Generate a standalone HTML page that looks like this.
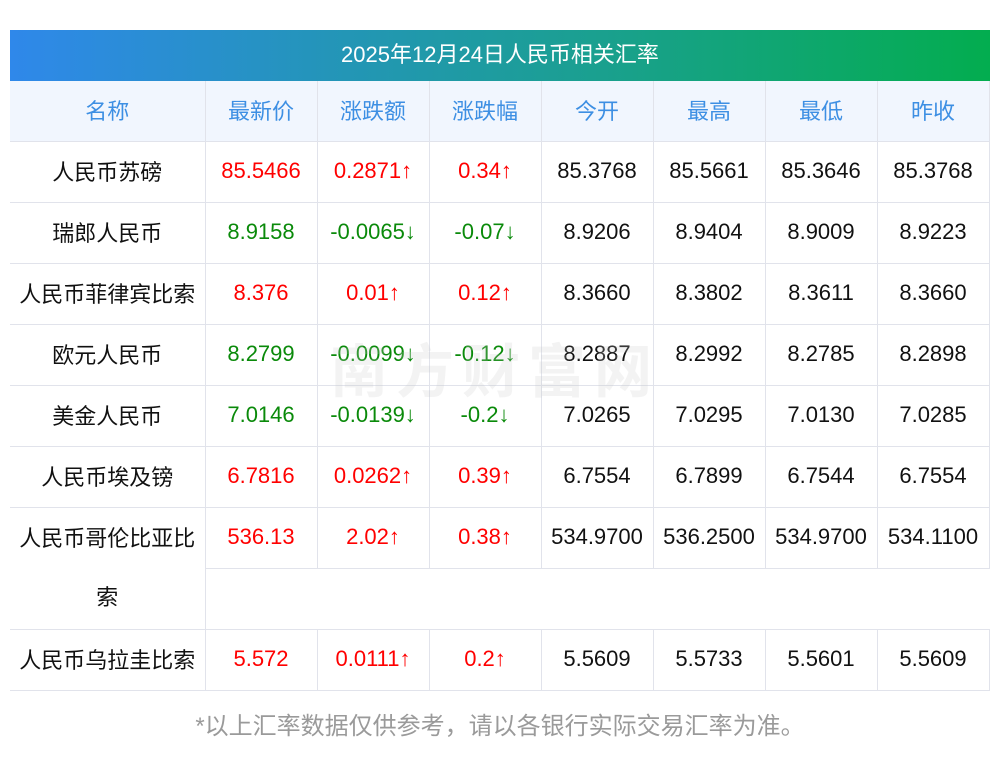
<!DOCTYPE html>
<html><head><meta charset="utf-8"><style>
body{margin:0;background:#fff;font-family:"Liberation Sans","Noto Sans CJK SC",sans-serif;}
.wrap{position:absolute;left:10px;top:30px;width:980px;}
.title{height:51px;line-height:49px;text-align:center;color:#fff;font-size:22px;background:linear-gradient(90deg,#2f88ea,#1aa08f 60%,#03ad4f);}
table{border-collapse:collapse;width:979px;table-layout:fixed;}
td{height:58px;padding:0 0 2px 0;border-bottom:1px solid #e1e3eb;border-right:1px solid #e1e3eb;text-align:center;font-size:22px;color:#111;white-space:nowrap;}
tr.h td{background:#f1f6fe;color:#3d8fe3;}
.r{color:#f00}.g{color:#0a8a0a}
.nb{border-right:none}
.foot{position:absolute;top:706px;left:0;width:1000px;text-align:center;color:#9a9a9a;font-size:24px;}
.wm{position:absolute;left:330px;top:325px;font-size:58px;color:rgba(200,200,200,.22);font-weight:bold;letter-spacing:8px}
</style></head><body>
<div class="wrap">
<div class="title">2025年12月24日人民币相关汇率</div>
<table>
<colgroup><col style="width:195px"><col style="width:112px"><col style="width:112px"><col style="width:112px"><col style="width:112px"><col style="width:112px"><col style="width:112px"><col style="width:112px"></colgroup>
<tr class="h"><td>名称</td><td>最新价</td><td>涨跌额</td><td>涨跌幅</td><td>今开</td><td>最高</td><td>最低</td><td>昨收</td></tr>
<tr><td>人民币苏磅</td><td class="r">85.5466</td><td class="r">0.2871↑</td><td class="r">0.34↑</td><td>85.3768</td><td>85.5661</td><td>85.3646</td><td>85.3768</td></tr>
<tr><td>瑞郎人民币</td><td class="g">8.9158</td><td class="g">-0.0065↓</td><td class="g">-0.07↓</td><td>8.9206</td><td>8.9404</td><td>8.9009</td><td>8.9223</td></tr>
<tr><td>人民币菲律宾比索</td><td class="r">8.376</td><td class="r">0.01↑</td><td class="r">0.12↑</td><td>8.3660</td><td>8.3802</td><td>8.3611</td><td>8.3660</td></tr>
<tr><td>欧元人民币</td><td class="g">8.2799</td><td class="g">-0.0099↓</td><td class="g">-0.12↓</td><td>8.2887</td><td>8.2992</td><td>8.2785</td><td>8.2898</td></tr>
<tr><td>美金人民币</td><td class="g">7.0146</td><td class="g">-0.0139↓</td><td class="g">-0.2↓</td><td>7.0265</td><td>7.0295</td><td>7.0130</td><td>7.0285</td></tr>
<tr><td>人民币埃及镑</td><td class="r">6.7816</td><td class="r">0.0262↑</td><td class="r">0.39↑</td><td>6.7554</td><td>6.7899</td><td>6.7544</td><td>6.7554</td></tr>
<tr><td rowspan="2" style="line-height:59px">人民币哥伦比亚比<br>索</td><td class="r">536.13</td><td class="r">2.02↑</td><td class="r">0.38↑</td><td>534.9700</td><td>536.2500</td><td>534.9700</td><td>534.1100</td></tr>
<tr><td colspan="7" class="nb"></td></tr>
<tr><td>人民币乌拉圭比索</td><td class="r">5.572</td><td class="r">0.0111↑</td><td class="r">0.2↑</td><td>5.5609</td><td>5.5733</td><td>5.5601</td><td>5.5609</td></tr>
</table>
</div>
<div class="wm">南方财富网</div>
<div class="foot">*以上汇率数据仅供参考，请以各银行实际交易汇率为准。</div>
</body></html>
